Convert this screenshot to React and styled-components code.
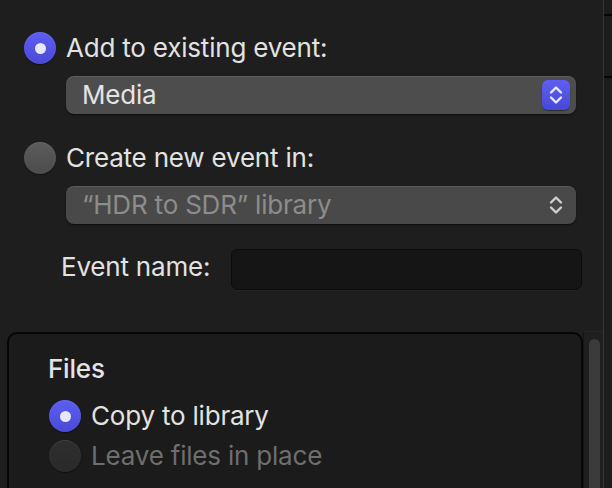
import React from "react";
import styled, { createGlobalStyle } from "styled-components";

const Global = createGlobalStyle`
  html, body { margin: 0; padding: 0; background: #1e1e1e; }
  body { font-family: Inter, "Noto Sans", "Liberation Sans", sans-serif; overflow: hidden; }
`;

const Window = styled.div`
  display: flex;
  width: 612px;
  height: 488px;
  background: #1e1e1e;
  overflow: hidden;
`;

const Main = styled.div`
  flex: 1;
  display: flex;
  flex-direction: column;
  min-width: 0;
`;

const Divider = styled.div`
  width: 1px;
  background: #363636;
`;

const SidePanel = styled.div`
  width: 8px;
  background: #1c1c1c;
  display: flex;
  flex-direction: column;
`;

const SideRule = styled.div`
  height: 2px;
  background: #050505;
  margin-top: ${(p) => p.$top}px;
`;

const Top = styled.div`
  display: flex;
  flex-direction: column;
  padding: 32px 27px 0 24px;
`;

const RadioRow = styled.label`
  display: flex;
  align-items: center;
  gap: 10px;
  height: 32px;
  margin-top: ${(p) => p.$mt || 0}px;
`;

const Radio = styled.span`
  width: 32px;
  height: 32px;
  border-radius: 50%;
  flex: none;
  display: flex;
  align-items: center;
  justify-content: center;
  box-sizing: border-box;
  background: ${(p) =>
    p.$checked
      ? "linear-gradient(#5d5df0, #4a4ad8)"
      : p.$dim
      ? "linear-gradient(#2e2e2e, #2a2a2a)"
      : "linear-gradient(#5c5c5c, #4c4c4c)"};
  box-shadow: 0 1px 1px rgba(0, 0, 0, 0.45), inset 0 1px 0 rgba(255,255,255,0.08);
  &::after {
    content: "";
    display: ${(p) => (p.$checked ? "block" : "none")};
    width: 11px;
    height: 11px;
    border-radius: 50%;
    background: #e6e6ff;
  }
`;

const Label = styled.span`
  font-size: 26px;
  line-height: 32px;
  letter-spacing: -0.2px;
  color: ${(p) => (p.$disabled ? "#6e6e6e" : "#e2e2e2")};
  white-space: nowrap;
`;

const FieldLabel = styled(Label)`
  margin-bottom: 6px;
`;

const Popup = styled.div`
  display: flex;
  align-items: center;
  justify-content: space-between;
  height: 38px;
  box-sizing: border-box;
  margin: 12px 0 0 42px;
  padding: 0 6px 0 16px;
  border-radius: 8px;
  background: ${(p) => (p.$disabled ? "#494949" : "#4d4d4d")};
  box-shadow: 0 1px 1.5px rgba(0, 0, 0, 0.6), inset 0 1px 0 rgba(255, 255, 255, 0.1);
`;

const PopupText = styled.span`
  font-size: 26px;
  line-height: 32px;
  letter-spacing: -0.2px;
  color: ${(p) => (p.$disabled ? "#8c8c8c" : "#e4e4e4")};
  white-space: nowrap;
`;

const Stepper = styled.span`
  width: 28px;
  height: 30px;
  border-radius: 6px;
  display: flex;
  align-items: center;
  justify-content: center;
  background: ${(p) => (p.$active ? "linear-gradient(#5e5ef2, #4848d6)" : "transparent")};
  box-shadow: ${(p) => (p.$active ? "0 1px 1px rgba(0,0,0,0.4)" : "none")};
`;

const FieldRow = styled.div`
  display: flex;
  align-items: center;
  gap: 21px;
  margin: 25px -6px 0 37px;
`;

const TextField = styled.div`
  flex: 1;
  height: 41px;
  box-sizing: border-box;
  border-radius: 6px;
  background: #151515;
  border: 1.5px solid #0c0c0c;
  box-shadow: 0 0.5px 0 rgba(255,255,255,0.06);
`;

const Bottom = styled.div`
  flex: 1;
  display: flex;
  margin-top: 41px;
  padding-left: 7px;
  min-height: 0;
`;

const GroupBox = styled.div`
  flex: 1;
  display: flex;
  flex-direction: column;
  margin-top: 1px;
  padding: 19px 0 0 40px;
  background: #1b1b1b;
  border: 2px solid #060606;
  border-bottom: none;
  border-radius: 10px 10px 0 0;
`;

const GroupTitle = styled.div`
  font-size: 26px;
  line-height: 32px;
  font-weight: 500;
  letter-spacing: -0.2px;
  color: #e4e4e4;
  margin-bottom: 15px;
  margin-left: -1px;
`;

const RadioList = styled.div`
  display: flex;
  flex-direction: column;
  gap: 8px;
`;

const ScrollTrack = styled.div`
  width: 20px;
  box-sizing: border-box;
  padding: 7px 3px 0 5px;
  background: #1f1f1f;
  border-left: 1px solid #151515;
  border-top: 1px solid #242424;
  display: flex;
`;

const ScrollThumb = styled.div`
  flex: 1;
  border-radius: 6px 6px 0 0;
  background: #3b3b3b;
`;

const Chevrons = ({ color }) => (
  <svg width="16" height="24" viewBox="0 0 16 24" fill="none">
    <path d="M3 9.5 L8 4.5 L13 9.5" stroke={color} strokeWidth="2.4" strokeLinecap="round" strokeLinejoin="round" />
    <path d="M3 14.5 L8 19.5 L13 14.5" stroke={color} strokeWidth="2.4" strokeLinecap="round" strokeLinejoin="round" />
  </svg>
);

export default function App() {
  return (
    <>
      <Global />
      <Window>
        <Main>
          <Top>
            <RadioRow>
              <Radio $checked />
              <Label>Add to existing event:</Label>
            </RadioRow>
            <Popup>
              <PopupText>Media</PopupText>
              <Stepper $active>
                <Chevrons color="#e8e8ff" />
              </Stepper>
            </Popup>
            <RadioRow $mt={28}>
              <Radio />
              <Label>Create new event in:</Label>
            </RadioRow>
            <Popup $disabled>
              <PopupText $disabled>“HDR to SDR” library</PopupText>
              <Stepper>
                <Chevrons color="#cfcfcf" />
              </Stepper>
            </Popup>
            <FieldRow>
              <FieldLabel>Event name:</FieldLabel>
              <TextField />
            </FieldRow>
          </Top>
          <Bottom>
            <GroupBox>
              <GroupTitle>Files</GroupTitle>
              <RadioList>
                <RadioRow>
                  <Radio $checked />
                  <Label>Copy to library</Label>
                </RadioRow>
                <RadioRow>
                  <Radio $dim />
                  <Label $disabled>Leave files in place</Label>
                </RadioRow>
              </RadioList>
            </GroupBox>
            <ScrollTrack>
              <ScrollThumb />
            </ScrollTrack>
          </Bottom>
        </Main>
        <Divider />
        <SidePanel>
          <SideRule $top={14} />
          <SideRule $top={60} />
        </SidePanel>
      </Window>
    </>
  );
}
